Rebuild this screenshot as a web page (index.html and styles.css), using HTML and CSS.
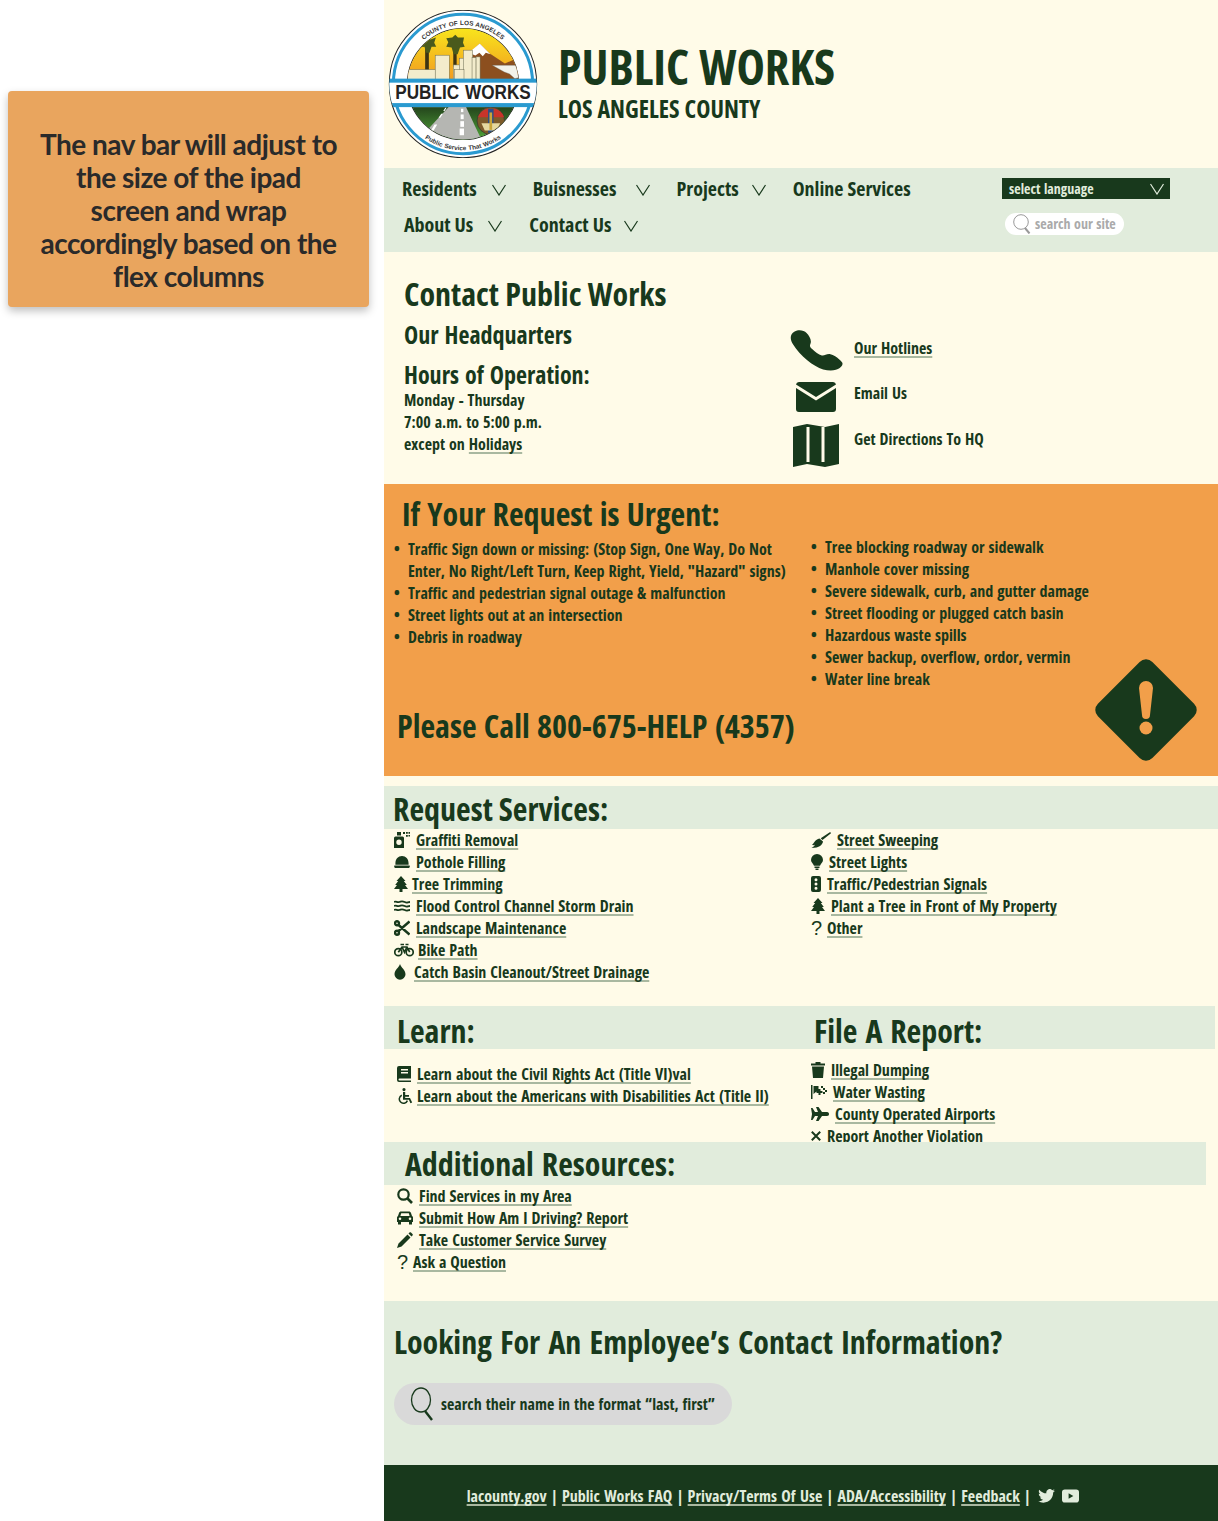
FILE: index.html
```html
<!DOCTYPE html>
<html lang="en">
<head>
    <meta charset="UTF-8">
    <meta name="viewport" content="width=device-width, initial-scale=1.0">
    <title>Public Works</title>
    <link rel="stylesheet" href="styles.css">
</head>
<body>
    <svg class="sprite" aria-hidden="true">
        <symbol id="i-spray" viewBox="0 0 16 16"><path d="M3 0h4v3.500H3zM1.500 4.500h7A1.500 1.500 0 0 1 10 6v10H0V6a1.500 1.500 0 0 1 1.500-1.500zM5 7.500a2.700 2.700 0 1 0 0 5.400 2.700 2.700 0 0 0 0-5.400zM9 0h2v2H9zM12 0h1.800v1.800H12zM14.500 0H16v1.800h-1.500zM12 3h1.800v1.800H12zM14.500 3H16v1.500h-1.500z"/></symbol>
        <symbol id="i-hat" viewBox="0 0 17 13"><path d="M8.500 0c4 0 7 3 7 8v1.500H1.500V8c0-5 3-8 7-8zM.5 10.200h16c.6 0 .5 2.800-1.500 2.800H2C0 13-.1 10.200.5 10.200z"/></symbol>
        <symbol id="i-tree" viewBox="0 0 14 16"><path d="M7 0l4.500 5H9.800l3 4H11l3 4H8.500v3h-3v-3H0l3-4H1.200l3-4H2.500z"/></symbol>
        <symbol id="i-water" viewBox="0 0 18 13"><path d="M0 2c3-1.500 3 1 6 0s3-1.500 6 0 3 0 6 0M0 6.500c3-1.500 3 1 6 0s3-1.500 6 0 3 0 6 0M0 11c3-1.500 3 1 6 0s3-1.500 6 0 3 0 6 0" fill="none" stroke="currentColor" stroke-width="2"/></symbol>
        <symbol id="i-scissors" viewBox="0 0 16 16"><path d="M3 1.200a2 2 0 1 1 0 4 2 2 0 0 1 0-4zM3 10.800a2 2 0 1 1 0 4 2 2 0 0 1 0-4zM4.500 5L15.500 14.500M4.500 11L15.500 1.500" fill="none" stroke="currentColor" stroke-width="2.400"/></symbol>
        <symbol id="i-bike" viewBox="0 0 20 14"><g fill="none" stroke="currentColor" stroke-width="1.700"><circle cx="4.300" cy="9.200" r="3.500"/><circle cx="15.700" cy="9.200" r="3.500"/><path d="M4.300 9.200L8 4h5l2.700 5.200M8 4l2.500 5.200L13 4M6.500 1.500h3.500M11.500 1.500h3"/></g></symbol>
        <symbol id="i-drop" viewBox="0 0 12 16"><path d="M6 0c1 3.500 5.500 6 5.500 10.200a5.500 5.500 0 0 1-11 0C.5 6 5 3.500 6 0z"/></symbol>
        <symbol id="i-broom" viewBox="0 0 20 16"><path d="M19.200 0l.8 1.200-8.500 6.800-1.800-1.800zM8.500 6.500l3.500 3c-.5 3-3.500 6.500-11.500 6.500 1.500-1 3-2 3.500-3.200-1 .4-2 .4-3 .2C3 11.500 4 7.500 8.500 6.500z"/></symbol>
        <symbol id="i-bulb" viewBox="0 0 12 16"><path d="M6 0a6 6 0 0 1 6 6c0 2.500-2.500 3.800-3 5.800H3C2.500 9.800 0 8.500 0 6a6 6 0 0 1 6-6zM3.500 12.600h5v1.500h-5zM4.500 14.600h3V16h-3z"/></symbol>
        <symbol id="i-signal" viewBox="0 0 10 16"><path fill-rule="evenodd" d="M2 0h6a2 2 0 0 1 2 2v12a2 2 0 0 1-2 2H2a2 2 0 0 1-2-2V2a2 2 0 0 1 2-2zM5 2.200a1.500 1.500 0 1 0 0 3 1.500 1.500 0 0 0 0-3zM5 6.500a1.500 1.500 0 1 0 0 3 1.500 1.500 0 0 0 0-3zM5 10.800a1.500 1.500 0 1 0 0 3 1.500 1.500 0 0 0 0-3z"/></symbol>
        <symbol id="i-book" viewBox="0 0 14 16"><path fill-rule="evenodd" d="M2 0h12v12.500H2.500a1 1 0 0 0 0 2H14V16H2a2 2 0 0 1-2-2V2a2 2 0 0 1 2-2zM4 3v1.500h7V3zM4 6v1.500h7V6z"/></symbol>
        <symbol id="i-wheelchair" viewBox="0 0 16 16"><path d="M7 0a1.600 1.600 0 1 1 0 3.200A1.600 1.600 0 0 1 7 0zM6 4h2.200v3h3.800v1.700H8.200V10h4.800l2.200 4.500-1.800.8-1.500-3.500H6z"/><path d="M4.800 7.200a4.200 4.200 0 1 0 5.600 5.400" fill="none" stroke="currentColor" stroke-width="1.500"/></symbol>
        <symbol id="i-search" viewBox="0 0 16 16"><circle cx="6.500" cy="6.500" r="5.200" fill="none" stroke="currentColor" stroke-width="2.200"/><path d="M10.500 10.500L15 15" stroke="currentColor" stroke-width="2.600"/></symbol>
        <symbol id="i-car" viewBox="0 0 16 13"><path fill-rule="evenodd" d="M4 0h8c1 0 1.500.5 2 1.500L15 4.500c.7.300 1 1 1 1.500v4.500h-1V13h-3v-2.500H4V13H1v-2.500H0V6c0-.5.300-1.200 1-1.500L2 1.500C2.500.5 3 0 4 0zM4.200 1.800L3.400 4.500h9.200l-.8-2.700zM3 6a1.300 1.300 0 1 0 0 2.600A1.300 1.300 0 0 0 3 6zm10 0a1.300 1.300 0 1 0 0 2.600A1.300 1.300 0 0 0 13 6z"/></symbol>
        <symbol id="i-pencil" viewBox="0 0 16 16"><path d="M10.500 2.500l3 3L4.500 14.500 0 16l1.500-4.500zM11.500 1.500l1-1c.5-.5 1-.5 1.500 0L15.500 2c.5.500.5 1 0 1.500l-1 1z"/></symbol>
        <symbol id="i-trash" viewBox="0 0 14 16"><path d="M0 1.500h4.500V0h5v1.500H14V3.500H0zM1 4.500h12L12 16H2z"/></symbol>
        <symbol id="i-flag" viewBox="0 0 16 14"><path d="M0 0h1.500v14H0zM2.500 1h5v3h2v2h2v2h-2v2h-2V8H5.500V6.500L2.500 9zM10 1h2v2h-2zM12 3h2v2h-2zM14 5h2v2h-2zM12 7h2v2h-2z"/></symbol>
        <symbol id="i-plane" viewBox="0 0 18 14"><path d="M0 1h1.500L4 5h3L5 0h2.500L11 5h5c1.500 0 2 1 2 2s-.5 2-2 2h-5l-3.500 5H5l2-5H4l-2.500 4H0l1-6z"/></symbol>
        <symbol id="i-x" viewBox="0 0 10 10"><path d="M.8.800l8.400 8.400M9.200.800L.8 9.200" stroke="currentColor" stroke-width="2"/></symbol>
        <symbol id="i-chevron" viewBox="0 0 14 12"><path d="M.5 1L7 11l6.500-10" fill="none" stroke="currentColor" stroke-width="1.200"/></symbol>
        <symbol id="i-lens" viewBox="0 0 18 20"><circle cx="8" cy="8" r="7.300" fill="none" stroke="currentColor" stroke-width="1"/><path d="M12 14l4.500 5.500" stroke="currentColor" stroke-width="2"/></symbol>
        <symbol id="i-lens-big" viewBox="0 0 26 34"><ellipse cx="11" cy="13" rx="9.500" ry="12" fill="none" stroke="currentColor" stroke-width="1.300"/><path d="M15 24l7 9" stroke="currentColor" stroke-width="2.400"/></symbol>
    </svg>

    <aside class="side">
        <div class="note">The nav bar will adjust to<br>the size of the ipad<br>screen and wrap<br>accordingly based on the<br>flex columns</div>
    </aside>

    <div class="page">
        <header class="site-header">
            <svg class="logo" viewBox="14 30 442 442" role="img" aria-label="Public Works logo">
                <defs>
                    <clipPath id="discClip"><circle cx="235" cy="251" r="220"/></clipPath>
                    <clipPath id="sceneClip"><circle cx="235" cy="251" r="166"/></clipPath>
                    <linearGradient id="sky" x1="0" y1="0" x2="0" y2="1"><stop offset="0" stop-color="#f9ec1c"/><stop offset="1" stop-color="#f19a20"/></linearGradient>
                    <linearGradient id="grass" x1="0" y1="0" x2="0" y2="1"><stop offset="0" stop-color="#24451c"/><stop offset="1" stop-color="#55b03c"/></linearGradient>
                    <path id="arcTop" d="M59 251a176 176 0 0 1 352 0"/>
                    <path id="arcBottom" d="M37 251a198 198 0 0 0 396 0"/>
                </defs>
                <circle cx="235" cy="251" r="220" fill="#fff" stroke="#222" stroke-width="3"/>
                <circle cx="235" cy="251" r="208" fill="none" stroke="#2a9ad0" stroke-width="9"/>
                <circle cx="235" cy="251" r="166" fill="#fff" stroke="#222" stroke-width="3"/>
                <g clip-path="url(#sceneClip)">
                    <rect x="50" y="70" width="370" height="170" fill="url(#sky)"/>
                    <path d="M240 240V170l45-40 30 30 45 30 28-12 40 30v32z" fill="#8c4f1f"/>
                    <path d="M252 158l33-28 32 32-14-4-9 10-10-10-12 8z" fill="#fff"/>
                    <path d="M322 195h90l-8 36-14 4-16-14-16-6z" fill="#f2f2ea" stroke="#555"/>
                    <rect x="122" y="130" width="11" height="82" fill="#3d3413"/>
                    <path d="M130 108l8 10 16-6-5 16 6 12-14 0-6 18h-10l-5-18-16 2 6-14-8-14 14 0z" fill="#4a5a1c"/>
                    <rect x="206" y="140" width="10" height="60" fill="#3d3413"/>
                    <path d="M212 104l8 8 18 0-3 16 5 12-14 2-7 20h-12l-6-20-16-2 6-14-6-12 18-2z" fill="#4a5a1c"/>
                    <g fill="#f3eccc" stroke="#6a6a50" stroke-width="1.500">
                        <rect x="70" y="208" width="84" height="30"/>
                        <rect x="152" y="165" width="42" height="72"/>
                        <rect x="206" y="194" width="34" height="44"/>
                        <rect x="224" y="174" width="30" height="64"/>
                        <rect x="236" y="150" width="28" height="88"/>
                        <rect x="262" y="172" width="12" height="66"/>
                        <rect x="274" y="170" width="12" height="68"/>
                        <rect x="210" y="208" width="28" height="30"/>
                    </g>
                    <rect x="50" y="320" width="370" height="110" fill="url(#grass)"/>
                    <path d="M192 320h52l52 110H90z" fill="#b5b6b2"/>
                    <g fill="#fff"><rect x="229" y="325" width="7" height="10"/><rect x="228" y="342" width="9" height="14"/><rect x="227" y="362" width="11" height="17"/><rect x="225" y="384" width="13" height="20"/><path d="M182 322l4 0-6 10-4 0zM170 340l5 0-8 12-5 0zM150 372l8 0-12 20-8 0z"/></g>
                    <circle cx="318" cy="361" r="41" fill="#7d5a2a" stroke="#333" stroke-width="2"/>
                    <path d="M280 350h30v-26a41 41 0 0 0-30 26zM326 324v26h32a41 41 0 0 0-32-26z" fill="#c8342a"/>
                    <rect x="310" y="325" width="16" height="72" fill="#2a4d8a"/>
                    <path d="M290 368h56l-10 22h-36z" fill="#e6d9a0"/>
                    <rect x="314" y="336" width="8" height="52" fill="#c9a53a"/>
                </g>
                <g clip-path="url(#discClip)">
                    <rect x="14" y="235" width="442" height="85" fill="#2a9ad0"/>
                    <rect x="14" y="247" width="442" height="61" fill="#fff"/>
                </g>
                <text class="logo-main" x="235" y="296" text-anchor="middle" textLength="405" lengthAdjust="spacingAndGlyphs">PUBLIC WORKS</text>
                <text class="logo-ring"><textPath href="#arcTop" startOffset="50%" text-anchor="middle">COUNTY OF LOS ANGELES</textPath></text>
                <text class="logo-ring"><textPath href="#arcBottom" startOffset="50%" text-anchor="middle">Public Service That Works</textPath></text>
            </svg>
            <div class="brand">
                <div class="brand-name">PUBLIC WORKS</div>
                <div class="brand-sub">LOS ANGELES COUNTY</div>
            </div>
        </header>

        <nav class="main-nav">
            <ul class="nav-links">
                <li class="nav-item">Residents <svg class="chev"><use href="#i-chevron"/></svg></li>
                <li class="nav-item nav-wide">Buisnesses <svg class="chev"><use href="#i-chevron"/></svg></li>
                <li class="nav-item nav-narrow">Projects <svg class="chev"><use href="#i-chevron"/></svg></li>
                <li class="nav-item">Online Services</li>
                <li class="nav-item nav-second">About Us <svg class="chev"><use href="#i-chevron"/></svg></li>
                <li class="nav-item nav-narrow">Contact Us <svg class="chev"><use href="#i-chevron"/></svg></li>
            </ul>
            <div class="nav-tools">
                <div class="lang-select">select language <svg class="chev"><use href="#i-chevron"/></svg></div>
                <div class="site-search"><svg class="lens"><use href="#i-lens"/></svg>search our site</div>
            </div>
        </nav>

        <section class="contact">
            <div class="contact-info">
                <h1>Contact Public Works</h1>
                <h2>Our Headquarters</h2>
                <h2 class="hours-title">Hours of Operation:</h2>
                <p class="hours">Monday - Thursday<br>7:00 a.m. to 5:00 p.m.<br>except on <a href="#">Holidays</a></p>
            </div>
            <ul class="contact-links">
                <li>
                    <span class="contact-icon">
                        <svg class="ic-phone" viewBox="0 0 160 122"><path d="M14 4C26-3 42 0 50 8c8 8 16 22 12 32-2 6-4 8 4 16 10 10 20 18 30 20 8 2 14-6 26-4s32 18 36 26c2 6-2 12-8 16-10 8-30 10-50 4C70 110 30 76 10 44 0 28-2 14 14 4z"/></svg>
                    </span>
                    <a href="#">Our Hotlines</a>
                </li>
                <li>
                    <span class="contact-icon">
                        <svg class="ic-mail" viewBox="0 0 40 30"><path d="M3 0h34a3 3 0 0 1 3 2.500L20 15 0 2.500A3 3 0 0 1 3 0z"/><path d="M0 6l20 12.500L40 6v21a3 3 0 0 1-3 3H3a3 3 0 0 1-3-3z"/></svg>
                    </span>
                    <span>Email Us</span>
                </li>
                <li>
                    <span class="contact-icon">
                        <svg class="ic-map" viewBox="0 0 46 43"><path d="M0 3l14-3 18 3 14-3v40l-14 3-18-3-14 3z"/><path d="M15 3v35M30 3v35" stroke="#fffbe8" stroke-width="3"/></svg>
                    </span>
                    <span>Get Directions To HQ</span>
                </li>
            </ul>
        </section>

        <section class="urgent">
            <h1 class="urgent-title">If Your Request is Urgent:</h1>
            <div class="urgent-cols">
                <ul class="urgent-list">
                    <li>Traffic Sign down or missing: (Stop Sign, One Way, Do Not Enter, No Right/Left Turn, Keep Right, Yield, "Hazard" signs)</li>
                    <li>Traffic and pedestrian signal outage &amp; malfunction</li>
                    <li>Street lights out at an intersection</li>
                    <li>Debris in roadway</li>
                </ul>
                <ul class="urgent-list urgent-right">
                    <li>Tree blocking roadway or sidewalk</li>
                    <li>Manhole cover missing</li>
                    <li>Severe sidewalk, curb, and gutter damage</li>
                    <li>Street flooding or plugged catch basin</li>
                    <li>Hazardous waste spills</li>
                    <li>Sewer backup, overflow, ordor, vermin</li>
                    <li>Water line break</li>
                </ul>
            </div>
            <div class="urgent-call">Please Call 800-675-HELP (4357)</div>
            <svg class="urgent-sign" viewBox="0 0 102 102"><rect x="12.500" y="12.500" width="77" height="77" rx="9" transform="rotate(45 51 51)" fill="#18391c"/><path d="M44 29a7 7 0 0 1 14 0l-3 27a4 4 0 0 1-8 0z" fill="#f29f4a"/><circle cx="51" cy="69" r="6.500" fill="#f29f4a"/></svg>
        </section>

        <section class="services">
            <h2 class="band">Request Services:</h2>
            <div class="two-col">
                <ul class="links">
                    <li><svg class="ic w16"><use href="#i-spray"/></svg><a href="#">Graffiti Removal</a></li>
                    <li><svg class="ic w16"><use href="#i-hat"/></svg><a href="#">Pothole Filling</a></li>
                    <li class="tight"><svg class="ic w14"><use href="#i-tree"/></svg><a href="#">Tree Trimming</a></li>
                    <li><svg class="ic w16"><use href="#i-water"/></svg><a href="#">Flood Control Channel Storm Drain</a></li>
                    <li><svg class="ic w16"><use href="#i-scissors"/></svg><a href="#">Landscape Maintenance</a></li>
                    <li class="tight"><svg class="ic w20"><use href="#i-bike"/></svg><a href="#">Bike Path</a></li>
                    <li class="wide"><svg class="ic w12"><use href="#i-drop"/></svg><a href="#">Catch Basin Cleanout/Street Drainage</a></li>
                </ul>
                <ul class="links">
                    <li><svg class="ic w20"><use href="#i-broom"/></svg><a href="#">Street Sweeping</a></li>
                    <li><svg class="ic w12"><use href="#i-bulb"/></svg><a href="#">Street Lights</a></li>
                    <li><svg class="ic w10"><use href="#i-signal"/></svg><a href="#">Traffic/Pedestrian Signals</a></li>
                    <li><svg class="ic w14"><use href="#i-tree"/></svg><a href="#">Plant a Tree in Front of My Property</a></li>
                    <li><span class="ic-q">?</span><a href="#">Other</a></li>
                </ul>
            </div>
        </section>

        <section class="learn-report">
            <div class="band band-split">
                <h2>Learn:</h2>
                <h2>File A Report:</h2>
            </div>
            <div class="learn-cols">
                <ul class="links learn-list">
                    <li><svg class="ic w14"><use href="#i-book"/></svg><a href="#">Learn about the Civil Rights Act (Title VI)val</a></li>
                    <li class="tight"><svg class="ic w16"><use href="#i-wheelchair"/></svg><a href="#">Learn about the Americans with Disabilities Act (Title II)</a></li>
                </ul>
                <ul class="links report-list">
                    <li><svg class="ic w14"><use href="#i-trash"/></svg><a href="#">Illegal Dumping</a></li>
                    <li><svg class="ic w16"><use href="#i-flag"/></svg><a href="#">Water Wasting</a></li>
                    <li><svg class="ic w18"><use href="#i-plane"/></svg><a href="#">County Operated Airports</a></li>
                    <li><svg class="ic w10"><use href="#i-x"/></svg><span>Report Another Violation</span></li>
                </ul>
            </div>
        </section>

        <section class="resources">
            <h2 class="band band-res">Additional Resources:</h2>
            <ul class="links res-list">
                <li><svg class="ic w16"><use href="#i-search"/></svg><a href="#">Find Services in my Area</a></li>
                <li><svg class="ic w16"><use href="#i-car"/></svg><a href="#">Submit How Am I Driving? Report</a></li>
                <li><svg class="ic w16"><use href="#i-pencil"/></svg><a href="#">Take Customer Service Survey</a></li>
                <li><span class="ic-q">?</span><a href="#">Ask a Question</a></li>
            </ul>
        </section>

        <section class="employee">
            <h2>Looking For An Employee’s Contact Information?</h2>
            <div class="employee-search"><svg class="lens-big"><use href="#i-lens-big"/></svg>search their name in the format “last, first”</div>
        </section>

        <footer class="site-footer">
            <a href="#">lacounty.gov</a> | <a href="#">Public Works FAQ</a> | <a href="#">Privacy/Terms Of Use</a> | <a href="#">ADA/Accessibility</a> | <a href="#">Feedback</a> |
            <svg class="social" viewBox="0 0 24 20"><path d="M24 2.400c-.9.400-1.800.600-2.800.800 1-.600 1.800-1.500 2.200-2.700-1 .6-2 1-3.100 1.200A4.900 4.900 0 0 0 11.900 6.200C7.800 6 4.200 4 1.700.9c-1.300 2.200-.7 5.100 1.500 6.600-.8 0-1.600-.2-2.200-.6 0 2.400 1.700 4.400 3.900 4.900-.7.200-1.500.2-2.200.1.600 2 2.400 3.400 4.600 3.400A9.900 9.900 0 0 1 0 17.300 13.900 13.900 0 0 0 7.500 19.500c9.100 0 14.300-7.700 14-14.600 1-.7 1.800-1.500 2.500-2.500z"/></svg>
            <svg class="social" viewBox="0 0 18 14"><path fill-rule="evenodd" d="M3 0h12a3 3 0 0 1 3 3v8a3 3 0 0 1-3 3H3a3 3 0 0 1-3-3V3a3 3 0 0 1 3-3zM7 4v6l5-3z"/></svg>
        </footer>
    </div>
</body>
</html>
```

FILE: styles.css
```css
* {
    box-sizing: border-box;
    word-spacing: 0.07em;
}
body {
    font-family: "Open Sans", "Liberation Sans", sans-serif;
    font-stretch: 75%;
    font-weight: 700;
    font-size: 16px;
    line-height: 22px;
    color: #18391c;
    margin: 0;
    padding: 0;
    display: flex;
    background-color: #fff;
}
ul {
    list-style: none;
    margin: 0;
    padding: 0;
}
h1, h2, p {
    margin: 0;
}
a {
    color: inherit;
    text-decoration: underline;
    text-decoration-color: #a9b8a0;
    text-decoration-thickness: 2px;
    text-decoration-skip-ink: none;
    text-underline-offset: 2px;
}
.sprite {
    display: none;
}

/* left note */
.side {
    width: 384px;
    flex: none;
    padding: 91px 15px 0 8px;
}
.note {
    height: 216px;
    padding-top: 37px;
    background-color: #e9a55e;
    border-radius: 4px;
    box-shadow: 0 4px 8px rgba(0, 0, 0, 0.25);
    color: #2a2a2a;
    font-family: "Lato", sans-serif;
    font-size: 28px;
    letter-spacing: -0.5px;
    line-height: 33px;
    text-align: center;
    word-spacing: 0;
}

.page {
    width: 834px;
    flex: none;
    background-color: #fffbe8;
}

/* header */
.site-header {
    height: 168px;
    display: flex;
    align-items: flex-start;
    padding: 10px 0 0 4px;
}
.logo {
    width: 150px;
    height: 148px;
    flex: none;
}
.logo-main {
    font-family: "Liberation Sans", sans-serif;
    font-stretch: normal;
    font-weight: 700;
    font-size: 58px;
    fill: #222;
}
.logo-ring {
    font-family: "Liberation Sans", sans-serif;
    font-stretch: normal;
    font-weight: 700;
    font-size: 19px;
    fill: #333;
}
.brand {
    margin: 32px 0 0 20px;
}
.brand-name {
    font-size: 48px;
    line-height: 50px;
    word-spacing: 0.03em;
}
.brand-sub {
    font-size: 24px;
    line-height: 30px;
    margin-top: 2px;
    word-spacing: 0.03em;
}

/* nav */
.main-nav {
    height: 84px;
    background-color: #e1ecdc;
    display: flex;
    justify-content: space-between;
    padding: 3px 48px 0 18px;
}
.nav-links {
    width: 540px;
    display: flex;
    flex-wrap: wrap;
    column-gap: 27px;
    align-content: flex-start;
}
.nav-item {
    font-size: 20px;
    line-height: 36px;
    display: flex;
    align-items: center;
    gap: 15px;
    word-spacing: 0.02em;
}
.nav-wide {
    gap: 20px;
    margin-right: -1px;
}
.nav-narrow {
    gap: 13px;
}
.nav-second {
    margin-left: 2px;
}
.chev {
    width: 14px;
    height: 12px;
    margin-top: 1px;
}
.nav-tools {
    width: 168px;
    padding-top: 7px;
}
.lang-select {
    height: 21px;
    background-color: #18391c;
    color: #e1ecdc;
    font-size: 14px;
    line-height: 21px;
    padding: 0 6px 0 7px;
    display: flex;
    justify-content: space-between;
    align-items: center;
}
.site-search {
    width: 119px;
    height: 22px;
    margin: 14px 0 0 3px;
    background-color: #fff;
    border-radius: 11px;
    color: #aaa;
    font-size: 14px;
    line-height: 22px;
    display: flex;
    align-items: center;
    gap: 4px;
    padding-left: 8px;
}
.lens {
    width: 18px;
    height: 20px;
    color: #999;
}

/* contact */
.contact {
    height: 232px;
    display: flex;
    padding: 22px 0 0 20px;
}
.contact-info {
    width: 385px;
}
.contact-info h1 {
    font-size: 32px;
    line-height: 40px;
    word-spacing: 0.02em;
}
.contact-info h2 {
    font-size: 24px;
    line-height: 30px;
    margin-top: 6px;
}
.contact-info .hours-title {
    margin-top: 10px;
}
.hours {
    margin-top: -1px;
}
.contact-links {
    padding-top: 51px;
}
.contact-links li {
    height: 45.500px;
    display: flex;
    align-items: center;
}
.contact-icon {
    width: 54px;
    margin-right: 11px;
    display: flex;
    justify-content: center;
}
.ic-phone {
    width: 53px;
    height: 41px;
    margin-top: 6px;
}
.ic-mail {
    width: 40px;
    height: 30px;
    margin-top: 8px;
}
.ic-map {
    width: 46px;
    height: 43px;
    margin-top: 14px;
}
.contact svg {
    fill: #18391c;
}

/* urgent */
.urgent {
    height: 292px;
    margin-bottom: 10px;
    padding: 10px 0 0 18px;
    background-color: #f29f4a;
    position: relative;
}
.urgent-title {
    font-size: 32px;
    line-height: 40px;
    word-spacing: 0.05em;
}
.urgent-cols {
    display: flex;
    margin-left: -8px;
}
.urgent-list {
    width: 417px;
    flex: none;
    padding: 4px 20px 0 14px;
}
.urgent-list li {
    display: list-item;
    list-style: disc;
}
.urgent-list li::marker {
    content: "•  ";
}
.urgent-right {
    margin-top: -2px;
}
.urgent-call {
    position: absolute;
    left: 13px;
    top: 222px;
    font-size: 32px;
    line-height: 40px;
    word-spacing: 0.05em;
}
.urgent-sign {
    position: absolute;
    right: 21px;
    top: 175px;
    width: 102px;
    height: 102px;
}

/* list sections */
.band {
    background-color: #e1ecdc;
    height: 43px;
    font-size: 32px;
    line-height: 46px;
    padding-left: 9px;
    word-spacing: 0.01em;
}
.two-col {
    display: flex;
    padding-left: 10px;
}
.two-col .links {
    width: 417px;
    flex: none;
}
.services {
    height: 220px;
}
.links li {
    display: flex;
    align-items: center;
    gap: 6px;
    height: 22px;
    white-space: nowrap;
}
.links .tight {
    gap: 4px;
}
.links .wide {
    gap: 8px;
}
.ic {
    height: 16px;
    flex: none;
    color: #18391c;
    fill: #18391c;
}
.w10 { width: 10px; }
.w12 { width: 12px; }
.w14 { width: 14px; }
.w16 { width: 16px; }
.w18 { width: 18px; }
.w20 { width: 20px; }
.ic-q {
    width: 10px;
    font-family: "Liberation Sans", sans-serif;
    font-stretch: normal;
    font-weight: 400;
    font-size: 20px;
    text-align: center;
}

.learn-report {
    height: 136px;
    overflow: hidden;
}
.band-split {
    width: 831px;
    display: flex;
    padding-left: 13px;
}
.band-split h2 {
    font-size: 32px;
    line-height: 50px;
    height: 43px;
    word-spacing: 0.07em;
}
.band-split h2:first-child {
    width: 417px;
}
.learn-cols {
    display: flex;
}
.learn-list {
    width: 426px;
    flex: none;
    padding: 14px 0 0 13px;
}
.learn-list a {
    word-spacing: 0.085em;
}
.report-list {
    padding: 10px 0 0 1px;
}

.resources {
    height: 159px;
}
.band-res {
    width: 822px;
    padding-left: 21px;
    line-height: 44px;
    word-spacing: 0.07em;
}
.res-list {
    padding: 0 0 0 13px;
}

/* employee */
.employee {
    height: 164px;
    background-color: #e1ecdc;
    padding: 21px 0 0 10px;
}
.employee h2 {
    font-size: 32px;
    line-height: 40px;
    word-spacing: 0.08em;
}
.employee-search {
    width: 338px;
    height: 42px;
    margin-top: 21px;
    background-color: #d9d9d9;
    border-radius: 21px;
    display: flex;
    align-items: center;
    gap: 5px;
    padding-left: 16px;
}
.lens-big {
    width: 26px;
    height: 34px;
}

/* footer */
.site-footer {
    height: 56px;
    background-color: #18391c;
    color: #e1ecdc;
    line-height: 62px;
    text-align: center;
    padding-right: 56px;
}
.site-footer, .site-footer a {
    word-spacing: 0.09em;
}
.social {
    width: 17px;
    height: 14px;
    margin-left: 3px;
    fill: #e1ecdc;
    vertical-align: -1px;
}
```
